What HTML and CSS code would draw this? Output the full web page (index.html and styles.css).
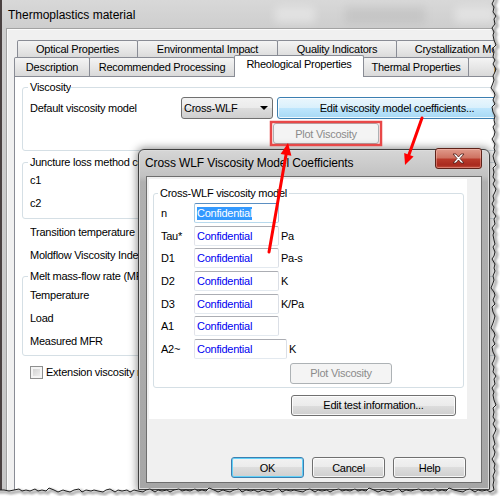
FILE: index.html
```html
<!DOCTYPE html>
<html>
<head>
    <meta charset="utf-8">
    <title>Thermoplastics material</title>
    <link rel="stylesheet" href="styles.css">
</head>
<body>
<div class="screen">

    <!-- property sheet of the material -->
    <div class="window">
        <div class="win-title">
            <span>Thermoplastics material</span>
            <div class="glass"><i></i><i></i><i></i></div>
        </div>
        <div class="win-client">
            <div class="tab-row back">
                <div class="tab t-optical">Optical Properties</div>
                <div class="tab t-env">Environmental Impact</div>
                <div class="tab t-quality">Quality Indicators</div>
                <div class="tab t-cryst">Crystallization Morphology</div>
            </div>
            <div class="tab-row front">
                <div class="tab t-desc">Description</div>
                <div class="tab t-rec">Recommended Processing</div>
                <div class="tab t-rheo selected">Rheological Properties</div>
                <div class="tab t-thermal">Thermal Properties</div>
                <div class="tab t-pvt">pvT Properties</div>
            </div>
            <div class="tab-panel">
                <fieldset class="group g-visc">
                    <legend>Viscosity</legend>
                    <div class="row">
                        <span class="lbl">Default viscosity model</span>
                        <div class="combo">Cross-WLF<span class="arrow"></span></div>
                        <button class="btn hot edit-coef">Edit viscosity model coefficients...</button>
                    </div>
                    <button class="btn plot-main" disabled>Plot Viscosity</button>
                </fieldset>

                <fieldset class="group g-junc">
                    <legend>Juncture loss method coefficients</legend>
                    <div class="line">c1</div>
                    <div class="line">c2</div>
                </fieldset>

                <div class="free first">Transition temperature</div>
                <div class="free">Moldflow Viscosity Index</div>

                <fieldset class="group g-melt">
                    <legend>Melt mass-flow rate (MFR)</legend>
                    <div class="line">Temperature</div>
                    <div class="line">Load</div>
                    <div class="line">Measured MFR</div>
                </fieldset>

                <div class="check-row">
                    <span class="check"></span><span class="check-text">Extension viscosity model</span>
                </div>
            </div>
        </div>
    </div>

    <!-- coefficients dialog -->
    <div class="dialog">
        <div class="dlg-title">
            <span>Cross WLF Viscosity Model Coefficients</span>
            <div class="close">
                <svg width="13" height="11" viewBox="0 0 13 11">
                    <path d="M1,1 h3 l2.5,3 l2.5,-3 h3 l-4,4.5 l4,4.5 h-3 l-2.5,-3 l-2.5,3 h-3 l4,-4.5 z"
                          fill="#fff" stroke="#4b1b14" stroke-width="0.8"/>
                </svg>
            </div>
        </div>
        <div class="dlg-client">
            <div class="sheet">
                <fieldset class="group g-cwlf">
                    <legend>Cross-WLF viscosity model</legend>
                    <div class="coef">
                        <div class="coef-row"><span class="sym">n</span><span class="field focus"><span class="sel">Confidential</span></span></div>
                        <div class="coef-row"><span class="sym">Tau*</span><span class="field">Confidential</span><span class="unit">Pa</span></div>
                        <div class="coef-row"><span class="sym">D1</span><span class="field">Confidential</span><span class="unit">Pa-s</span></div>
                        <div class="coef-row"><span class="sym">D2</span><span class="field">Confidential</span><span class="unit">K</span></div>
                        <div class="coef-row"><span class="sym">D3</span><span class="field">Confidential</span><span class="unit">K/Pa</span></div>
                        <div class="coef-row"><span class="sym">A1</span><span class="field">Confidential</span></div>
                        <div class="coef-row"><span class="sym">A2~</span><span class="field wide">Confidential</span><span class="unit">K</span></div>
                    </div>
                    <button class="btn plot-dlg" disabled>Plot Viscosity</button>
                </fieldset>
                <button class="btn test-info">Edit test information...</button>
            </div>
            <div class="dlg-buttons">
                <button class="btn default">OK</button>
                <button class="btn">Cancel</button>
                <button class="btn">Help</button>
            </div>
        </div>
    </div>

    <!-- callouts -->
    <svg class="marks" width="500" height="496" viewBox="0 0 500 496">
        <rect x="271" y="122" width="110" height="23" fill="none" stroke="#e84848" stroke-width="2.5"/>
        <g stroke="#ff0000" stroke-width="3" stroke-linecap="round">
            <line x1="269" y1="252" x2="286.5" y2="152"/>
            <line x1="422" y1="118" x2="408.5" y2="156"/>
        </g>
        <polygon fill="#ff0000" points="288,143 291.4,155.7 280.6,153.9"/>
        <polygon fill="#ff0000" points="405,165 413.6,156.5 404.2,152.9"/>
    </svg>

    <!-- torn paper edge -->
    <svg class="tear" width="500" height="496" viewBox="0 0 500 496">
        <defs>
            <path id="edge" d="M494,0
                l-2,4 l2,3 l-1,5 l3,4 l-2,3 l1,5 l-3,4 l2,4 l-1,3 l1,5
                l2,5 l-3,3 l1,4 l-1,5 l2,3 l-2,4 l3,5 l-1,3 l-2,4 l1,4
                l-1,3 l-2,5 l3,4 l1,3 l-2,5 l2,4 l-3,3 l1,5 l2,4 l-1,4
                l1,4 l-2,3 l2,5 l-1,4 l-2,3 l3,5 l-1,4 l1,3 l-2,5 l1,4
                l2,5 l-3,3 l1,4 l-1,5 l2,3 l-2,4 l3,5 l-1,3 l-2,4 l1,4
                l-2,4 l2,3 l-1,5 l3,4 l-2,3 l1,5 l-3,4 l2,4 l-1,3 l1,5
                l1,4 l-2,3 l2,5 l-1,4 l-2,3 l3,5 l-1,4 l1,3 l-2,5 l1,4
                l-1,3 l-2,5 l3,4 l1,3 l-2,5 l2,4 l-3,3 l1,5 l2,4 l-1,4
                l-1,3 l-2,5 l3,4 l1,3 l-2,5 l2,4 l-3,3 l1,5 l2,4 l-1,4
                l-2,4 l2,3 l-1,5 l3,4 l-2,3 l1,5 l-3,4 l2,4 l-1,3 l1,5
                l2,5 l-3,3 l1,4 l-1,5 l2,3 l-2,4 l3,5 l-1,3 l-2,4 l1,4
                l1,4 l-2,3 l2,5 l-1,4 l-2,3 l3,5 l-1,4 l1,3 l-2,5 l1,4
                l-1,5 l1,5
                l-4,2 l-3,-2 l-5,1 l-4,-1 l-3,2 l-5,-3 l-4,1 l-3,2 l-5,-1 l-4,-1
                l-5,-2 l-3,3 l-4,-1 l-4,1 l-3,-2 l-5,2 l-4,-1 l-4,1 l-3,-2 l-5,1
                l-3,1 l-5,-1 l-4,2 l-3,-3 l-5,1 l-4,2 l-4,-1 l-3,-1 l-5,2 l-4,-2
                l-5,-2 l-3,3 l-4,-1 l-4,1 l-3,-2 l-5,2 l-4,-1 l-4,1 l-3,-2 l-5,1
                l-4,2 l-3,-2 l-5,1 l-4,-1 l-3,2 l-5,-3 l-4,1 l-3,2 l-5,-1 l-4,-1
                l-3,1 l-5,-1 l-4,2 l-3,-3 l-5,1 l-4,2 l-4,-1 l-3,-1 l-5,2 l-4,-2
                l-3,1 l-5,-1 l-4,2 l-3,-3 l-5,1 l-4,2 l-4,-1 l-3,-1 l-5,2 l-4,-2
                l-5,-2 l-3,3 l-4,-1 l-4,1 l-3,-2 l-5,2 l-4,-1 l-4,1 l-3,-2 l-5,1
                l-4,2 l-3,-2 l-5,1 l-4,-1 l-3,2 l-5,-3 l-4,1 l-3,2 l-5,-1 l-4,-1
                l-4,2 l-3,-2 l-5,1 l-4,-1 l-3,2 l-5,-3 l-4,1 l-3,2 l-5,-1 l-4,-1
                l-3,1 l-5,-1 l-4,2 l-3,-3 l-5,1 l-4,2 l-4,-1 l-3,-1 l-5,2 l-4,-2
                l-5,-2 l-3,3 l-4,-1 l-4,1 l-3,-2 l-5,2 l-4,-1 l-4,1 l-3,-2 l-5,1
                l-5,1 l-5,-1 l-6,0 l-6,0
                L-6,506 L506,506 L506,-10 L496,-10 Z"/>
            <filter id="soft" x="-5%" y="-5%" width="110%" height="110%">
                <feGaussianBlur stdDeviation="1"/>
            </filter>
        </defs>
        <use href="#edge" fill="#fff"/>
        <use href="#edge" fill="none" stroke="#777" stroke-width="3" opacity=".6"
             transform="translate(2,2)" filter="url(#soft)"/>
        <use href="#edge" fill="none" stroke="#1e1e1e" stroke-width="1"/>
    </svg>
</div>
</body>
</html>
```

FILE: styles.css
```css
* {
    box-sizing: border-box;
}

body {
    margin: 0;
    background: #fff;
    font-family: "Liberation Sans", Arial, sans-serif;
    font-size: 11px;
    letter-spacing: -0.25px;
    color: #000;
}

.screen {
    position: relative;
    width: 500px;
    height: 496px;
    overflow: hidden;
}

/* main window */
.window {
    width: 540px;
    height: 530px;
    border-left: 2px solid #4a4141;
    background: linear-gradient(#d8d8d8, #cecece 28px, #c6c6c6);
}

.win-title {
    height: 29px;
    display: flex;
    align-items: center;
    padding-left: 6px;
    font-size: 12px;
    letter-spacing: 0;
}

.glass {
    display: flex;
    gap: 30px;
    margin-left: 140px;
}

.glass i {
    width: 40px;
    height: 16px;
    background: rgba(255, 255, 255, .35);
    filter: blur(4px);
}

.glass i:nth-child(2) {
    width: 80px;
    background: rgba(0, 0, 0, .06);
}

.win-client {
    margin-left: 5px;
    height: 510px;
    padding-top: 10px;
    border-left: 1px solid #fbfbfb;
    border-top: 1px solid #fbfbfb;
    box-shadow: -1px -1px 0 #a2a2a2;
    background: #f0f0f0;
}

/* tabs */
.tab-row {
    display: flex;
}

.back {
    height: 18px;
    padding-left: 9px;
}

.front {
    height: 19px;
    margin-top: -1px;
    padding-left: 6px;
    align-items: flex-end;
}

.tab {
    flex: none;
    margin-right: -1px;
    border: 1px solid #898c95;
    border-bottom: 0;
    border-radius: 2px 2px 0 0;
    background: linear-gradient(#f4f4f4, #e6e6e6 55%, #d9d9d9);
    text-align: center;
    white-space: nowrap;
    overflow: hidden;
}

.back .tab {
    height: 18px;
    line-height: 16px;
}

.front .tab {
    height: 19px;
    line-height: 18px;
}

.front .tab.selected {
    position: relative;
    z-index: 1;
    height: 22px;
    line-height: 17px;
    margin-bottom: -1px;
    background: #fff;
}

.t-optical { width: 121px; }
.t-env { width: 141px; }
.t-quality { width: 120px; }
.t-cryst { width: 160px; }
.t-desc { width: 76px; }
.t-rec { width: 146px; }
.t-rheo { width: 130px; }
.t-thermal { width: 106px; }
.t-pvt { width: 120px; }

.tab-panel {
    height: 440px;
    margin-left: 6px;
    padding-left: 7px;
    border: 1px solid #898c95;
    background: #fff;
}

/* group boxes */
.group {
    margin: 0;
    min-width: 0;
    padding: 0 0 0 7px;
    border: 1px solid #d5dfe5;
    border-radius: 3px;
}

.group legend {
    padding: 0 2px;
    margin-left: -2px;
    line-height: 13px;
    white-space: nowrap;
}

.tab-panel .group {
    width: 520px;
}

/* the left column runs under the dialog, its labels stop at its edge */
.tab-panel legend {
    max-width: 110px;
    padding-right: 0;
    overflow: hidden;
}

.g-visc {
    margin-top: 4px;
    padding-top: 3px;
    padding-bottom: 6px;
}

.g-junc {
    margin-top: 5px;
    padding-bottom: 3px;
}

.g-melt {
    margin-top: 3px;
    padding-top: 1px;
    padding-bottom: 2px;
}

.row {
    display: flex;
    align-items: center;
}

.lbl {
    width: 151px;
}

.line, .free {
    height: 23px;
    line-height: 23px;
    white-space: nowrap;
}

.free {
    width: 108px;
    margin-left: 8px;
    overflow: hidden;
}

.free.first {
    margin-top: 2px;
}

.check-row {
    display: flex;
    align-items: center;
    height: 22px;
    margin: 5px 0 0 8px;
}

.check {
    width: 13px;
    height: 13px;
    margin-right: 3px;
    border: 1px solid #8e8f8f;
    background: linear-gradient(135deg, #cbcbcb, #f6f6f6);
    box-shadow: inset 0 0 0 2px #f4f4f4;
}

.check-text {
    width: 92px;
    overflow: hidden;
    white-space: nowrap;
}

/* buttons */
.btn {
    display: block;
    padding: 0;
    font: inherit;
    letter-spacing: inherit;
    color: #000;
    border: 1px solid #707070;
    border-radius: 3px;
    background: linear-gradient(#f2f2f2, #ebebeb 50%, #dddddd 50%, #cfcfcf);
    box-shadow: inset 0 0 0 1px rgba(255, 255, 255, .8);
    white-space: nowrap;
}

.btn:disabled {
    color: #8b8b8b;
    border-color: #adb2b5;
    background: #f4f4f4;
    box-shadow: none;
}

.btn.hot {
    border-color: #3c7fb1;
    background: linear-gradient(#eaf6fd, #d9f0fc 50%, #bee6fd 50%, #a7d9f5);
}

.btn.default {
    border-color: #3c7fb1;
    box-shadow: inset 0 0 0 1px #62d1f8;
}

.combo {
    display: flex;
    align-items: center;
    width: 92px;
    height: 22px;
    padding-left: 2px;
    border: 1px solid #707070;
    border-radius: 3px;
    background: linear-gradient(#f2f2f2, #ebebeb 50%, #dddddd 50%, #cfcfcf);
}

.combo .arrow {
    width: 0;
    height: 0;
    margin-left: auto;
    margin-right: 4px;
    border: 4px solid transparent;
    border-top-color: #000;
    border-bottom: 0;
}

.edit-coef {
    width: 240px;
    height: 22px;
    margin-left: 4px;
}

.plot-main {
    width: 106px;
    height: 21px;
    margin: 4px 0 0 243px;
}

/* dialog */
.dialog {
    position: absolute;
    left: 138px;
    top: 149px;
    z-index: 5;
    width: 352px;
    height: 341px;
    border: 1px solid #3f3f3f;
    border-radius: 6px 6px 0 0;
    background: linear-gradient(#d6d6d6, #c2c2c2 26px, #b0b0b0 32px, #a6a6a6);
    box-shadow: 0 0 9px 1px rgba(0, 0, 0, .45), inset 0 0 0 1px #dcdcdc;
}

.dlg-title {
    height: 26px;
    display: flex;
    align-items: center;
    padding-left: 6px;
    font-size: 12px;
    letter-spacing: -0.1px;
}

.close {
    align-self: flex-start;
    display: flex;
    align-items: center;
    justify-content: center;
    width: 47px;
    height: 21px;
    margin: -2px 7px 0 auto;
    border: 1px solid #5e2219;
    border-radius: 3px;
    background: linear-gradient(#e09a8b, #cf7463 45%, #b8392a 55%, #a92a1e 85%, #c4513f);
    box-shadow: inset 0 0 0 1px rgba(255, 200, 190, .4);
}

.dlg-client {
    height: 307px;
    margin: 0 7px;
    padding: 2px 0 0 2px;
    border: 1px solid #6e6e6e;
    background: #f0f0f0;
}

.sheet {
    width: 318px;
    height: 240px;
    padding: 8px 0 0 4px;
    background: #fff;
}

.g-cwlf {
    width: 311px;
    padding: 3px 0 3px 6px;
}

.coef {
    display: flex;
    flex-direction: column;
    gap: 2.67px;
}

.coef-row {
    display: flex;
    align-items: center;
    height: 20px;
    margin-left: 1px;
}

.sym {
    width: 33px;
}

.field {
    width: 85px;
    height: 20px;
    padding-left: 2px;
    line-height: 18px;
    color: #0000f0;
    border: 1px solid;
    border-color: #abadb3 #dbdfe6 #e3e9ef #e2e3ea;
    border-radius: 2px;
}

.field.wide {
    width: 93px;
}

.field.focus {
    border-color: #5b8fc2 #a4c9e3 #b7d9ed #a4c9e3;
}

.field .sel {
    display: inline-block;
    line-height: 13px;
    color: #fff;
    background: #3399ff;
}

.unit {
    margin-left: 2px;
}

.plot-dlg {
    width: 102px;
    height: 21px;
    margin: 4px 0 0 130px;
}

.test-info {
    width: 165px;
    height: 21px;
    margin: 7px 0 0 138px;
}

.dlg-buttons {
    display: flex;
    justify-content: flex-end;
    gap: 8px;
    margin-top: 38px;
    padding-right: 15px;
}

.dlg-buttons .btn {
    width: 73px;
    height: 21px;
}

/* overlays */
.marks, .tear {
    position: absolute;
    left: 0;
    top: 0;
    z-index: 10;
    pointer-events: none;
}

.tear {
    z-index: 11;
}
```
